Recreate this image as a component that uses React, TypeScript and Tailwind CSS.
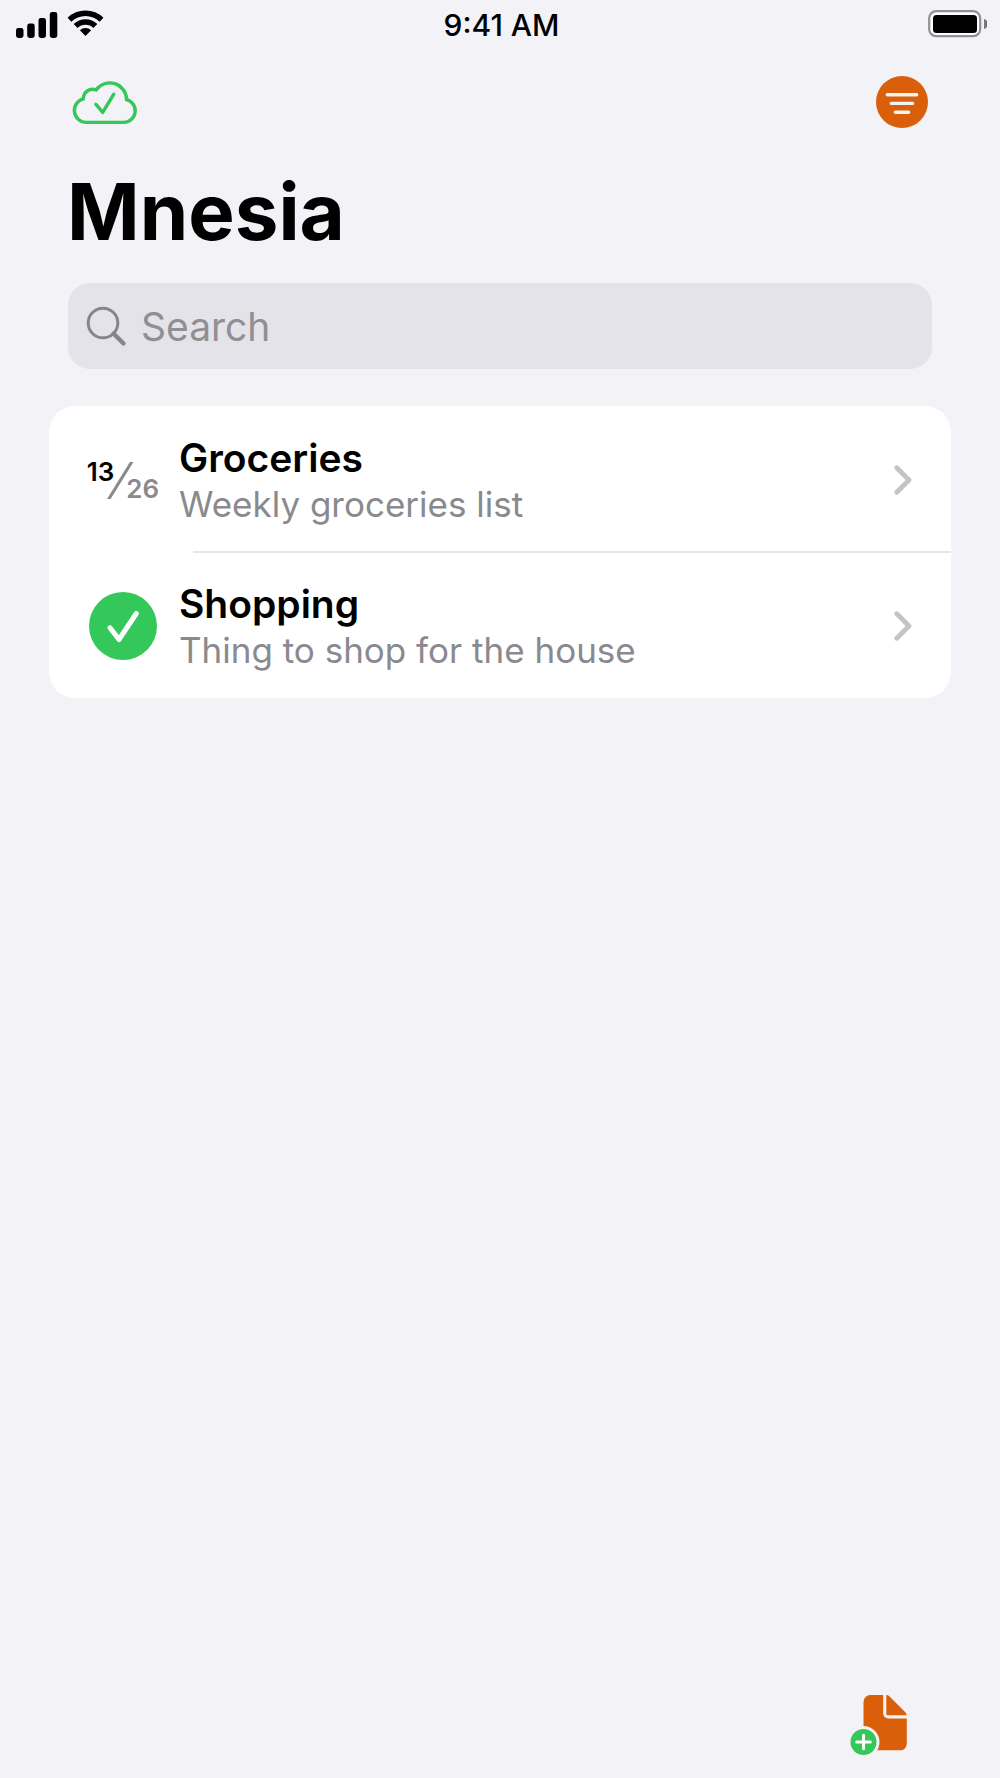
import React from "react";

function StatusBar() {
  return (
    <div className="grid h-[50px] grid-cols-3 items-center pr-[13px] pl-4">
      <div className="flex items-center gap-[9px]">
        <svg width="42" height="26" viewBox="0 0 42 26" role="img" aria-label="Signal">
          <rect x="0" y="16" width="7.5" height="10" rx="2.4" />
          <rect x="11.2" y="11.5" width="7.5" height="14.5" rx="2.4" />
          <rect x="22.5" y="6" width="7.5" height="20" rx="2.4" />
          <rect x="33.8" y="0" width="7.5" height="26" rx="2.4" />
        </svg>
        <svg className="-mt-1" width="37" height="28" viewBox="0 0 37 28" role="img" aria-label="Wi-Fi">
          <path d="M0.6 8.8 A25.3 25.3 0 0 1 36.4 8.8 L32.6 12.7 A20 20 0 0 0 4.4 12.7 Z" />
          <path d="M6.7 15 A16.8 16.8 0 0 1 30.3 15 L26.4 18.9 A11.3 11.3 0 0 0 10.6 18.9 Z" />
          <path d="M12.9 21.3 A8 8 0 0 1 24.1 21.3 L18.5 27 Z" />
        </svg>
      </div>
      <time className="text-center text-[30px] leading-[34px] font-medium whitespace-nowrap">9:41 AM</time>
      <svg className="-mt-0.5 justify-self-end" width="59" height="28" viewBox="0 0 59 28" role="img" aria-label="Battery">
        <rect x="1.2" y="1.2" width="51" height="25" rx="7" fill="white" stroke="#909094" strokeWidth="2.2" />
        <rect x="5" y="5" width="44" height="18" rx="3.5" />
        <path d="M56 9 A5.2 5.2 0 0 1 56 19 Z" fill="#77777b" />
      </svg>
    </div>
  );
}

function Header() {
  return (
    <header className="flex h-[104px] items-center justify-between pr-[72px] pl-[72px]">
      <button type="button" aria-label="Synced">
        <svg width="66" height="46" viewBox="0 0 66 46" fill="none" stroke="#34c759" strokeWidth="3.4">
          <path d="M14.5 43.4 H52 A11.6 11.6 0 0 0 54.6 20.6 A16.9 16.9 0 0 0 24 10.9 A9.4 9.4 0 0 0 11.3 19.8 A12 12 0 0 0 14.5 43.4 Z" />
          <path d="M23.8 25.2 L30.7 33.4 L41.8 15.2" strokeLinecap="round" strokeLinejoin="round" />
        </svg>
      </button>
      <button type="button" aria-label="Filter">
        <svg width="52" height="52" viewBox="0 0 52 52">
          <circle cx="26" cy="26" r="26" fill="#d95f0a" />
          <path d="M11.3 18.8 H40.7 M15.3 27.4 H36.7 M19.3 36.2 H32.7" stroke="#f2f2f7" strokeWidth="3.4" strokeLinecap="round" />
        </svg>
      </button>
    </header>
  );
}

function SearchField() {
  return (
    <label className="mx-[68px] flex h-[86px] items-center rounded-[22px] bg-[#e3e3e9] pt-0.5 pl-[18px]">
      <svg className="shrink-0" width="42" height="42" viewBox="0 0 42 42" fill="none" stroke="#85858a">
        <circle cx="17" cy="17" r="14.8" strokeWidth="3" />
        <path d="M27.5 27.5 L37.5 37.5" strokeWidth="4.4" strokeLinecap="round" />
      </svg>
      <input
        type="search"
        aria-label="Search"
        placeholder="Search"
        className="ml-[13px] min-w-0 flex-1 bg-transparent text-[39px] leading-[48px] outline-none placeholder:text-[#8f8f94]"
      />
    </label>
  );
}

function Fraction({ done, total }: { done: number; total: number }) {
  return (
    <div className="flex h-[37px] text-[26px] leading-[20px] font-semibold">
      <span>{done}</span>
      <svg className="-mx-2 shrink-0" width="28" height="37" viewBox="0 0 28 37">
        <path d="M1 37 L4.6 37 L27.5 0 L23.9 0 Z" fill="#8a8a8e" />
      </svg>
      <span className="self-end text-[#8a8a8e]">{total}</span>
    </div>
  );
}

function DoneBadge() {
  return (
    <svg width="68" height="68" viewBox="0 0 68 68" role="img" aria-label="Completed">
      <circle cx="34" cy="34" r="34" fill="#34c759" />
      <path d="M21 35.8 L30 47.5 L47.3 21.5" fill="none" stroke="white" strokeWidth="5" strokeLinecap="round" strokeLinejoin="round" />
    </svg>
  );
}

type RowProps = { title: string; note: string; icon: React.ReactNode };

function ListRow({ title, note, icon }: RowProps) {
  return (
    <a href="#" className="flex h-[146px] items-center pt-0.5 pr-[39px] pl-[31px]">
      <div className="flex w-[86px] shrink-0 justify-center">{icon}</div>
      <div className="ml-[13px] min-w-0 flex-1">
        <h2 className="text-[39px] leading-[48px] font-semibold">{title}</h2>
        <p className="text-[35px] leading-[44px] text-[#8a8a8e]">{note}</p>
      </div>
      <svg width="18" height="30" viewBox="0 0 18 30" fill="none" stroke="#c4c4c6" strokeWidth="4.8" strokeLinecap="round" strokeLinejoin="round">
        <path d="M2.8 2.8 L15 15 L2.8 27.2" />
      </svg>
    </a>
  );
}

export default function App() {
  return (
    <div className="flex min-h-screen flex-col bg-[#f2f2f7] font-['Inter',sans-serif] text-black">
      <StatusBar />
      <Header />
      <main className="flex-1">
        <h1 className="mt-2.5 mb-[23px] px-[67px] text-[78px] leading-[96px] font-bold">Mnesia</h1>
        <SearchField />
        <ul className="mx-[49px] mt-[37px] rounded-[26px] bg-white">
          <li>
            <ListRow title="Groceries" note="Weekly groceries list" icon={<Fraction done={13} total={26} />} />
          </li>
          <li>
            <hr className="-mt-px -mb-px ml-36 h-0.5 border-0 bg-[#e6e6e7]" />
            <ListRow title="Shopping" note="Thing to shop for the house" icon={<DoneBadge />} />
          </li>
        </ul>
      </main>
      <footer className="flex justify-end pr-[92px] pb-[22px]">
        <button type="button" aria-label="New list">
          <svg width="58" height="62" viewBox="0 0 58 62">
            <path d="M20.5 1 H33.2 V19.5 A5 5 0 0 0 38.2 24.5 H56.8 V49.8 A6.5 6.5 0 0 1 50.3 56.3 H13.5 V8 A7 7 0 0 1 20.5 1 Z" fill="#d95f0a" />
            <path d="M36.3 1 Q38 1 39.3 2.3 L55.3 18.3 Q56.5 19.5 56.5 21.2 H37.8 Q36.3 21.2 36.3 19.7 Z" fill="#d95f0a" />
            <circle cx="13.5" cy="48" r="16" fill="#f2f2f7" />
            <circle cx="13.5" cy="48" r="13" fill="#34c759" />
            <path d="M6.7 48 H20.3 M13.5 41.2 V54.8" stroke="white" strokeWidth="3" strokeLinecap="round" />
          </svg>
        </button>
      </footer>
    </div>
  );
}
